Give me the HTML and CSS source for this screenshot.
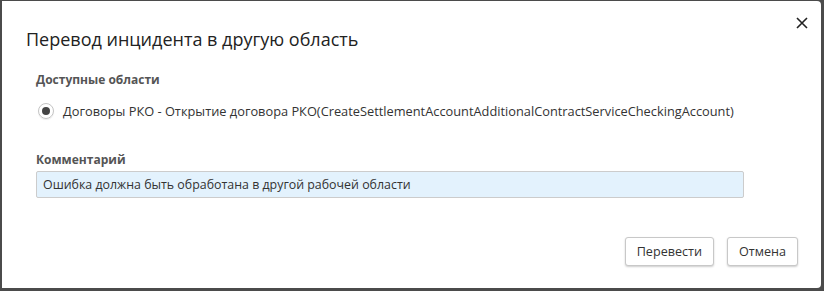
FILE: index.html
```html
<!DOCTYPE html>
<html lang="ru">
<head>
<meta charset="utf-8">
<link rel="stylesheet" href="styles.css">
</head>
<body>
<div class="dialog">
  <div class="header">
    <h1 class="title">Перевод инцидента в другую область</h1>
    <button class="close" aria-label="Закрыть">
      <svg width="12" height="12" viewBox="0 0 12 12"><path d="M1 1L11 11M11 1L1 11" stroke="#222" stroke-width="1.6" fill="none"/></svg>
    </button>
  </div>
  <div class="body">
    <div class="label">Доступные области</div>
    <label class="radio-row">
      <span class="radio"><span class="dot"></span></span>
      <span class="radio-text">Договоры РКО - Открытие договора РКО(CreateSettlementAccountAdditionalContractServiceCheckingAccount)</span>
    </label>
    <div class="label comment-label">Комментарий</div>
    <div class="input">Ошибка должна быть обработана в другой рабочей области</div>
  </div>
  <div class="footer">
    <button class="btn">Перевести</button>
    <button class="btn">Отмена</button>
  </div>
</div>
</body>
</html>
```
FILE: styles.css
```css
html, body {
  margin: 0;
  padding: 0;
  background: #4b4b4b;
  height: 100%;
}
body {
  padding: 1px 3px 3px 2px;
  box-sizing: border-box;
  font-family: "Open Sans", "Noto Sans", sans-serif;
  color: #333;
}
.dialog {
  background: #fff;
  height: 287px;
  width: 819px;
  border-radius: 0 4px 4px 0;
  display: flex;
  flex-direction: column;
  box-sizing: border-box;
}
.header {
  display: flex;
  justify-content: space-between;
  align-items: flex-start;
  padding: 24px 12px 0 24px;
  height: 71px;
  box-sizing: border-box;
}
.title {
  margin: 0;
  font-weight: 400;
  font-size: 18px;
  line-height: 28px;
  color: #222;
}
.close {
  border: 0;
  background: none;
  padding: 0;
  margin-top: -9px;
  width: 14px;
  height: 14px;
  display: flex;
  align-items: center;
  justify-content: center;
}
.body {
  padding: 0 0 0 34px;
  flex: 1;
}
.label {
  font-size: 12px;
  font-weight: 700;
  color: #555;
  line-height: 16px;
}
.radio-row {
  display: flex;
  align-items: center;
  margin-top: 14px;
  gap: 9px;
  font-size: 12.8px;
  color: #333;
}
.radio {
  width: 16px;
  height: 16px;
  border: 1px solid #c4c4c4;
  border-radius: 50%;
  display: flex;
  align-items: center;
  justify-content: center;
  box-sizing: border-box;
  margin-left: 2px;
  box-shadow: 0 1px 1px rgba(0,0,0,0.08);
}
.dot {
  width: 8px;
  height: 8px;
  border-radius: 50%;
  background: #444;
}
.comment-label {
  margin-top: 32px;
}
.input {
  margin-top: 3px;
  width: 708px;
  height: 27px;
  box-sizing: border-box;
  background: #e3f2fd;
  border: 1px solid #ccc;
  border-radius: 2px;
  font-size: 12.4px;
  line-height: 25px;
  padding: 0 6px;
  color: #333;
}
.footer {
  display: flex;
  justify-content: flex-end;
  gap: 13px;
  padding: 0 23px 22px 0;
}
.btn {
  font-family: inherit;
  font-size: 12.6px;
  color: #333;
  background: #fff;
  border: 1px solid #c8c8c8;
  border-radius: 3px;
  height: 29px;
  padding: 0 11px;
  box-shadow: 0 1px 2px rgba(0,0,0,0.2);
}
```
